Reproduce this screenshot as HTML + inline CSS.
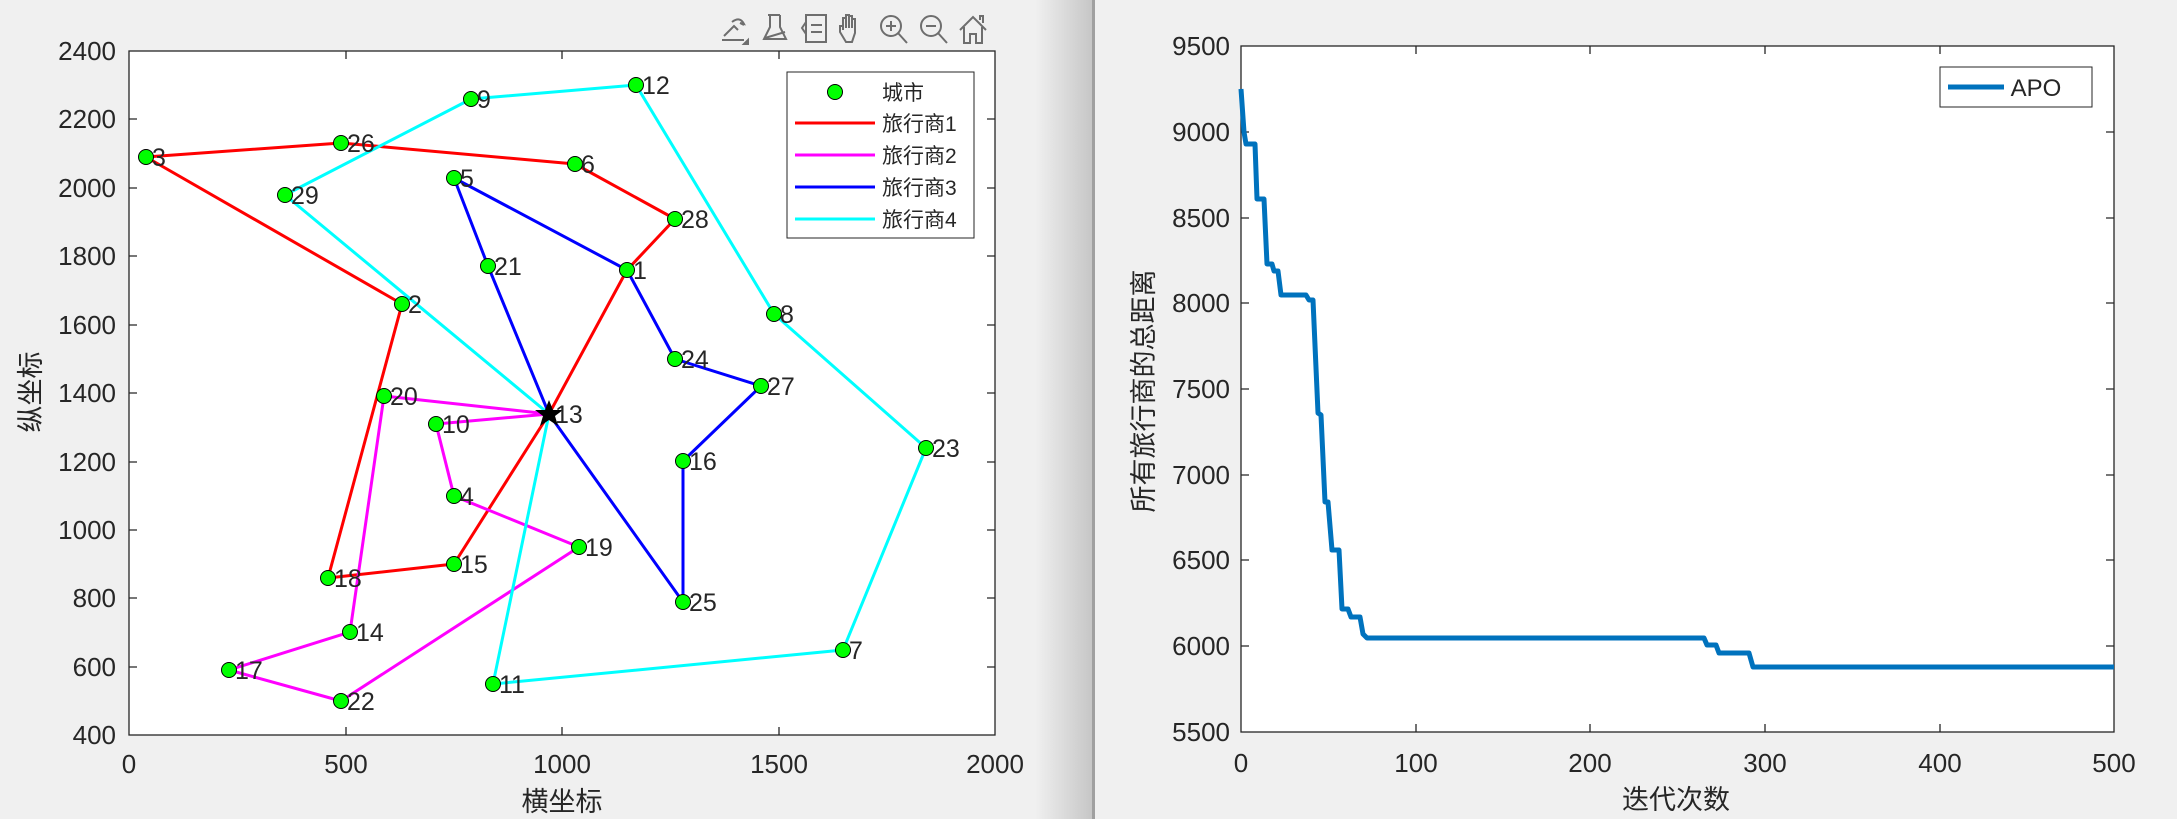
<!DOCTYPE html>
<html><head><meta charset="utf-8"><style>
html,body{margin:0;padding:0;background:#f0f0f0;}
svg{display:block;}
text{font-family:"Liberation Sans","Noto Sans CJK SC",sans-serif;fill:#262626;}
</style></head><body>
<svg width="2177" height="819" viewBox="0 0 2177 819" xmlns="http://www.w3.org/2000/svg">
<defs><linearGradient id="sh" x1="0" x2="1"><stop offset="0" stop-color="#f0f0f0"/><stop offset="1" stop-color="#c6c6c6"/></linearGradient></defs>
<rect width="2177" height="819" fill="#f0f0f0"/>
<rect x="1035" y="0" width="58" height="819" fill="url(#sh)"/>
<rect x="1092" y="0" width="3" height="819" fill="#a0a0a0"/>
<rect x="1095" y="0" width="1082" height="819" fill="#f0f0f0"/>

<!-- toolbar -->
<g fill="none" stroke="#6e6e6e" stroke-width="2">
<path d="M722 40 h22 M724 36 l10 -10 l4 4 M732 22 q8 -6 12 2 l-4 -1 M740 23 l4 2"/>
<path d="M744 44 l4 -4 v4z" fill="#6e6e6e"/>
<path d="M768 15 h12 M770 15 v12 l-6 12 h22 l-6 -12 v-12 M765 38 l20 -6"/>
<rect x="806" y="15" width="20" height="27"/><path d="M806 22 l-4 6 l4 6 M811 25 h11 M811 32 h11"/>
<path d="M846 42 l-6 -10 v-6 l3 0 v4 v-12 h3 v10 v-13 h3 v13 v-12 h3 v12 v-9 h3 v14 l-3 9z"/>
<circle cx="891" cy="26" r="10"/><path d="M898 33 l9 10 M886 26 h10 M891 21 v10"/>
<circle cx="931" cy="26" r="10"/><path d="M938 33 l9 10 M926 26 h10"/>
<path d="M960 30 l13 -13 l13 13 M964 27 v16 h6 v-9 h6 v9 h6 v-16 M980 20 v-4 h3 v7"/>
</g>

<!-- LEFT AXES -->
<rect x="129" y="51" width="866" height="684" fill="#fff" stroke="#262626" stroke-width="1.3"/>
<g stroke="#262626" stroke-width="1.3">
<path d="M346 735v-8M562 735v-8M779 735v-8M346 51v8M562 51v8M779 51v8"/>
<path d="M129 667h8M129 598h8M129 530h8M129 462h8M129 393h8M129 325h8M129 256h8M129 188h8M129 119h8M995 667h-8M995 598h-8M995 530h-8M995 462h-8M995 393h-8M995 325h-8M995 256h-8M995 188h-8M995 119h-8"/>
</g>
<g font-size="26" text-anchor="end">
<text x="116" y="744">400</text><text x="116" y="676">600</text><text x="116" y="607">800</text><text x="116" y="539">1000</text><text x="116" y="471">1200</text><text x="116" y="402">1400</text><text x="116" y="334">1600</text><text x="116" y="265">1800</text><text x="116" y="197">2000</text><text x="116" y="128">2200</text><text x="116" y="60">2400</text>
</g>
<g font-size="26" text-anchor="middle">
<text x="129" y="773">0</text><text x="346" y="773">500</text><text x="562" y="773">1000</text><text x="779" y="773">1500</text><text x="995" y="773">2000</text>
<text x="562" y="811" font-size="27">横坐标</text>
<text transform="translate(40,392) rotate(-90)" font-size="27">纵坐标</text>
</g>

<g fill="none" stroke-width="3" stroke-linejoin="round">
<polyline stroke="#ff0000" points="549,414 627,270 675,219 575,164 341,143 146,157 402,304 328,578 454,564 549,414"/>
<polyline stroke="#ff00ff" points="549,414 384,396 350,632 229,670 341,701 579,547 454,496 436,424 549,414"/>
<polyline stroke="#0000ff" points="549,414 488,266 454,178 627,270 675,359 761,386 683,461 683,602 549,414"/>
<polyline stroke="#00ffff" points="549,414 493,684 843,650 926,448 774,314 636,85 471,99 285,195 549,414"/>
</g>
<g fill="#00ff00" stroke="#000" stroke-width="1">
<circle cx="627" cy="270" r="7.5"/><circle cx="402" cy="304" r="7.5"/><circle cx="146" cy="157" r="7.5"/><circle cx="454" cy="496" r="7.5"/><circle cx="454" cy="178" r="7.5"/><circle cx="575" cy="164" r="7.5"/><circle cx="843" cy="650" r="7.5"/><circle cx="774" cy="314" r="7.5"/><circle cx="471" cy="99" r="7.5"/><circle cx="436" cy="424" r="7.5"/><circle cx="493" cy="684" r="7.5"/><circle cx="636" cy="85" r="7.5"/><circle cx="350" cy="632" r="7.5"/><circle cx="454" cy="564" r="7.5"/><circle cx="683" cy="461" r="7.5"/><circle cx="229" cy="670" r="7.5"/><circle cx="328" cy="578" r="7.5"/><circle cx="579" cy="547" r="7.5"/><circle cx="384" cy="396" r="7.5"/><circle cx="488" cy="266" r="7.5"/><circle cx="341" cy="701" r="7.5"/><circle cx="926" cy="448" r="7.5"/><circle cx="675" cy="359" r="7.5"/><circle cx="683" cy="602" r="7.5"/><circle cx="341" cy="143" r="7.5"/><circle cx="761" cy="386" r="7.5"/><circle cx="675" cy="219" r="7.5"/><circle cx="285" cy="195" r="7.5"/>
</g>
<path d="M549 400 l4 10 h10 l-8 6 l3 10 l-9 -6 l-9 6 l3 -10 l-8 -6 h10z" fill="#000"/>
<g font-size="25" fill="#000">
<text x="633" y="279">1</text><text x="408" y="313">2</text><text x="152" y="166">3</text><text x="460" y="505">4</text><text x="460" y="187">5</text><text x="581" y="173">6</text><text x="849" y="659">7</text><text x="780" y="323">8</text><text x="477" y="108">9</text><text x="442" y="433">10</text><text x="499" y="693">11</text><text x="642" y="94">12</text><text x="555" y="423">13</text><text x="356" y="641">14</text><text x="460" y="573">15</text><text x="689" y="470">16</text><text x="235" y="679">17</text><text x="334" y="587">18</text><text x="585" y="556">19</text><text x="390" y="405">20</text><text x="494" y="275">21</text><text x="347" y="710">22</text><text x="932" y="457">23</text><text x="681" y="368">24</text><text x="689" y="611">25</text><text x="347" y="152">26</text><text x="767" y="395">27</text><text x="681" y="228">28</text><text x="291" y="204">29</text>
</g>
<!-- legend -->
<rect x="787" y="72" width="187" height="166" fill="#fff" stroke="#262626" stroke-width="1"/>
<circle cx="835" cy="92" r="7.5" fill="#00ff00" stroke="#000"/>
<g stroke-width="3"><path d="M795 123h80" stroke="#ff0000"/><path d="M795 155h80" stroke="#ff00ff"/><path d="M795 187h80" stroke="#0000ff"/><path d="M795 219h80" stroke="#00ffff"/></g>
<g font-size="21" fill="#000"><text x="882" y="100">城市</text><text x="882" y="131">旅行商1</text><text x="882" y="163">旅行商2</text><text x="882" y="195">旅行商3</text><text x="882" y="227">旅行商4</text></g>

<!-- RIGHT AXES -->
<rect x="1241" y="46" width="873" height="686" fill="#fff" stroke="#262626" stroke-width="1.3"/>
<g stroke="#262626" stroke-width="1.3">
<path d="M1416 732v-8M1590 732v-8M1765 732v-8M1940 732v-8M1416 46v8M1590 46v8M1765 46v8M1940 46v8"/>
<path d="M1241 646h8M1241 560h8M1241 475h8M1241 389h8M1241 303h8M1241 218h8M1241 132h8M2114 646h-8M2114 560h-8M2114 475h-8M2114 389h-8M2114 303h-8M2114 218h-8M2114 132h-8"/>
</g>
<g font-size="26" text-anchor="end">
<text x="1230" y="741">5500</text><text x="1230" y="655">6000</text><text x="1230" y="569">6500</text><text x="1230" y="484">7000</text><text x="1230" y="398">7500</text><text x="1230" y="312">8000</text><text x="1230" y="227">8500</text><text x="1230" y="141">9000</text><text x="1230" y="55">9500</text>
</g>
<g font-size="26" text-anchor="middle">
<text x="1241" y="772">0</text><text x="1416" y="772">100</text><text x="1590" y="772">200</text><text x="1765" y="772">300</text><text x="1940" y="772">400</text><text x="2114" y="772">500</text>
<text x="1676" y="809" font-size="27">迭代次数</text>
<text transform="translate(1153,391) rotate(-90)" font-size="27">所有旅行商的总距离</text>
</g>
<polyline fill="none" stroke="#0072bd" stroke-width="5" stroke-linejoin="round" points="1241,89 1244,132 1246,144 1255,144 1257,199 1264,199 1267,264 1272,264 1274,271 1278,271 1281,295 1306,295 1309,300 1313,300 1318,413 1321,415 1325,502 1328,502 1332,550 1339,550 1342,609 1348,609 1351,617 1360,617 1363,634 1367,638 1704,638 1707,645 1716,645 1719,653 1749,653 1753,667 2114,667"/>
<rect x="1940" y="67" width="152" height="40" fill="#fff" stroke="#262626" stroke-width="1"/>
<path d="M1948 87h56" stroke="#0072bd" stroke-width="5"/>
<text x="2036" y="96" font-size="24" fill="#000" text-anchor="middle">APO</text>
</svg>
</body></html>
